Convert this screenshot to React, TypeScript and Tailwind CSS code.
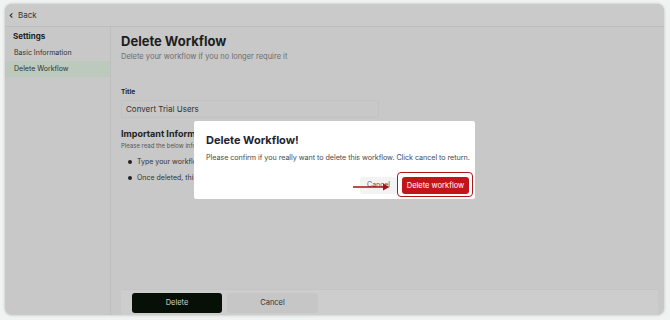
import React from "react";

export default function App() {
  return (
    <div
      className="w-[670px] h-[320px] bg-[#f1f2f2] pt-[4px] pl-[5px] overflow-hidden"
      style={{ fontFamily: "Inter, 'Liberation Sans', sans-serif" }}
    >
      <div className="relative w-[659px] h-[311px] rounded-[7px] bg-[#c8c8c8] shadow-[0_0_3px_rgba(0,0,0,0.25)] overflow-hidden flex flex-col">
        {/* Header */}
        <div className="h-[23px] shrink-0 flex items-center pl-[3px] gap-[3px] bg-[#cacaca] border-b border-[#bdbdbd]">
          <svg width="7" height="7" viewBox="0 0 8 8" className="text-[#333]">
            <path d="M5 1.5 L2.5 4 L5 6.5" fill="none" stroke="currentColor" strokeWidth="1.3" />
          </svg>
          <span className="text-[8px] text-[#333]">Back</span>
        </div>
        <div className="flex flex-1 min-h-0">
          {/* Sidebar */}
          <div className="w-[106px] shrink-0 border-r border-[#bfbfbf] pt-[0px] flex flex-col">
            <div className="pl-[8px] text-[8px] font-bold text-[#222] h-[18px] flex items-center">Settings</div>
            <div className="pl-[9px] text-[7px] text-[#333] h-[16px] flex items-center">Basic Information</div>
            <div className="pl-[9px] text-[7px] text-[#333] h-[16px] flex items-center bg-[#bccabd]">Delete Workflow</div>
          </div>
          {/* Main */}
          <div className="flex-1 flex flex-col pl-[10px] pr-[6px]">
            <div className="pt-[6px]">
              <div className="text-[13px] font-bold text-[#1e1e1e] leading-[16px]">Delete Workflow</div>
              <div className="text-[7.5px] text-[#6d6d6d] mt-[2px]">Delete your workflow if you no longer require it</div>
            </div>
            <div className="mt-[26px] text-[6.5px] font-bold text-[#222]">Title</div>
            <div className="mt-[2px] w-[258px] h-[18px] border border-[#c2c2c2] rounded-[2px] flex items-center pl-[4px] text-[8px] text-[#333]">
              Convert Trial Users
            </div>
            <div className="mt-[9px] text-[9px] font-bold text-[#222]">Important Information</div>
            <div className="mt-[0px] text-[6px] text-[#555]">Please read the below information</div>
            <div className="mt-[7px] flex flex-col gap-[6px] pl-[7px]">
              <div className="flex items-center gap-[5px] text-[7px] text-[#333]">
                <span className="w-[4px] h-[4px] rounded-full bg-[#222]" />
                Type your workflow title to confirm
              </div>
              <div className="flex items-center gap-[5px] text-[7px] text-[#333]">
                <span className="w-[4px] h-[4px] rounded-full bg-[#222]" />
                Once deleted, this action cannot be undone
              </div>
            </div>
            <div className="flex-1" />
            <div className="h-[26px] mb-0 bg-[#cdcdcd] border-t border-[#c4c4c4] flex items-center pl-[11px] gap-[5px]">
              <div className="w-[90px] h-[20px] rounded-[3px] bg-[#061006] text-[#d0d0d0] text-[7.5px] flex items-center justify-center">
                Delete
              </div>
              <div className="w-[91px] h-[20px] rounded-[3px] bg-[#c6c6c6] text-[#333] text-[7.5px] flex items-center justify-center">
                Cancel
              </div>
            </div>
          </div>
        </div>

        {/* Modal */}
        <div className="absolute left-[189px] top-[117px] w-[281px] h-[78px] bg-white rounded-[2px] pl-[12px] pr-[6px] pt-[12px] flex flex-col">
          <div className="text-[11px] font-bold text-[#1f2430] leading-[14px]">Delete Workflow!</div>
          <div className="mt-[6px] text-[7.2px] text-[#4a4a4a] whitespace-nowrap tracking-[-0.05px]">
            Please confirm if you really want to delete this workflow. Click cancel to return.
          </div>
          <div className="mt-[13px] flex justify-end items-center gap-[5px]">
            <div className="relative w-[37px] h-[17px] bg-[#f3f3f3] rounded-[3px] text-[7px] text-[#555] flex items-center justify-center">
              Cancel
            </div>
            <div className="relative w-[67px] h-[17px] bg-[#c2141b] rounded-[3px] text-white text-[7.5px] flex items-center justify-center">
              Delete workflow
              <div className="absolute -left-[5px] -right-[4px] -top-[5px] -bottom-[3px] border border-[#b0161c] rounded-[4px]" />
            </div>
          </div>
          {/* Arrow annotation */}
          <svg className="absolute left-[158px] top-[61px]" width="40" height="10" viewBox="0 0 40 10">
            <line x1="1" y1="5" x2="33" y2="5" stroke="#a3141a" strokeWidth="1.6" />
            <path d="M31 1.5 L37.5 5 L31 8.5 Z" fill="#a3141a" />
          </svg>
        </div>
      </div>
    </div>
  );
}
